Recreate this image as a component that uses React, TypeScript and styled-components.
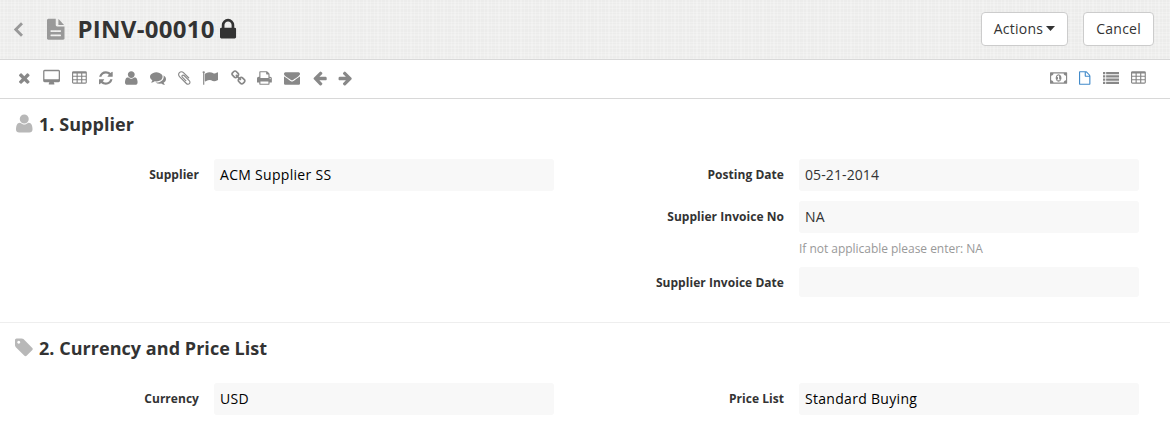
import React from 'react';
import styled, { createGlobalStyle } from 'styled-components';

const GlobalStyle = createGlobalStyle`
  * { box-sizing: border-box; }
  body {
    margin: 0;
    background: #fff;
    color: #333;
    font-family: 'Open Sans', 'Noto Sans', sans-serif;
    font-size: 14px;
    line-height: 20px;
  }
`;

const CELL = 'h-320q-14 0-23 9t-9 23v192q0 14 9 23t23 9h320q14 0 23-9t9-23z';
const tableCells = [576, 1088, 1600]
  .flatMap((x) => [608, 992, 1376].map((y) => `M${x} ${y}v-192q0-14-9-23t-23-9${CELL}`))
  .join('');
const listRows = [224, 592, 960, 1328]
  .map((y) => `M0 ${y}h256v240h-256zM352 ${y}h1440v240h-1440z`)
  .join('');

/* Each glyph: left offset, advance width and outline on a 1792-unit em. */
const glyphs = {
  times: [192, 1408, 'M1490 1322q0 40-28 68l-136 136q-28 28-68 28t-68-28l-294-294-294 294q-28 28-68 28t-68-28l-136-136q-28-28-28-68t28-68l294-294-294-294q-28-28-28-68t28-68l136-136q28-28 68-28t68 28l294 294 294-294q28-28 68-28t68 28l136 136q28 28 28 68t-28 68l-294 294 294 294q28 28 28 68z'],
  desktop: [-64, 1920, 'M1696 992v-832q0-13-9.500-22.500t-22.500-9.500h-1536q-13 0-22.500 9.500t-9.500 22.500v832q0 13 9.500 22.500t22.500 9.500h1536q13 0 22.500-9.500t9.500-22.500zM1840 128v1088q0 66-47 113t-113 47h-528q0 37 16 77.500t32 71 16 43.500q0 26-19 45t-45 19h-512q-26 0-45-19t-19-45q0-14 16-44t32-70 16-78h-528q-66 0-113-47t-47-113v-1088q0-66 47-113t113-47h1568q66 0 113 47t47 113z'],
  table: [64, 1664, tableCells + 'M1728 288v1088q0 66-47 113t-113 47h-1344q-66 0-113-47t-47-113v-1088q0-66 47-113t113-47h1344q66 0 113 47t47 113z'],
  refresh: [128, 1536, 'M1639 1056q0 5-1 7-64 268-268 434.500t-478 166.500q-146 0-282.500-55t-243.500-157l-129 129q-19 19-45 19t-45-19-19-45v-448q0-26 19-45t45-19h448q26 0 45 19t19 45-19 45l-137 137q71 66 161 102t187 36q134 0 250-65t186-179q11-17 53-117 8-23 30-23h192q13 0 22.500 9.500t9.500 22.500zm25-800v448q0 26-19 45t-45 19h-448q-26 0-45-19t-19-45 19-45l138-138q-148-137-349-137-134 0-250 65t-186 179q-11 17-53 117-8 23-30 23h-199q-13 0-22.500-9.500t-9.500-22.500v-7q65-268 270-434.500t480-166.500q146 0 284 55.500t245 156.500l130-129q19-19 45-19t45 19 19 45z'],
  user: [192, 1408, 'M1600 1405q0 120-73 189.500t-194 69.500h-874q-121 0-194-69.500t-73-189.500q0-53 3.500-103.500t14-109 26.500-108.500 43-97.500 62-81 85.500-53.500 111.500-20q9 0 42 21.500t74.500 48 108 48 133.500 21.500 133.500-21.500 108-48 74.500-48 42-21.500q61 0 111.500 20t85.500 53.500 62 81 43 97.500 26.500 108.500 14 109 3.500 103.500zm-320-893q0 159-112.500 271.500t-271.500 112.500-271.500-112.500-112.500-271.500 112.500-271.500 271.500-112.500 271.500 112.500 112.500 271.500z'],
  comments: [0, 1792, 'M1408 768q0 139-94 257t-256.500 186.500-353.500 68.500q-86 0-176-16-124 88-278 128-36 9-86 16h-3q-11 0-20.500-8t-11.500-21q-1-3-1-6.500t.5-6.500 2-6l2.500-5 3.500-5.500 4-5 4.500-5 4-4.500q5-6 23-25t26-29.500 22.500-29 25-38.500 20.500-44q-124-72-195-177t-71-224q0-139 94-257t256.500-186.500 353.500-68.500 353.500 68.500 256.500 186.500 94 257zm384 256q0 120-71 224.500t-195 176.500q10 24 20.500 44t25 38.500 22.500 29 26 29.500 23 25q1 1 4 4.500t4.500 5 4 5 3.500 5.500l2.500 5 2 6 .5 6.500-1 6.500q-3 14-13 22t-22 7q-50-7-86-16-154-40-278-128-90 16-176 16-271 0-472-132 58 4 88 4 161 0 309-45t264-129q125-92 192-212t67-254q0-77-23-152 129 71 204 178t75 230z'],
  paperclip: [192, 1408, 'M1596 1385q0 117-79 196t-196 79q-135 0-235-100l-777-776q-113-115-113-271 0-159 110-270t269-111q158 0 273 113l605 606q10 10 10 22 0 16-30.500 46.500t-46.500 30.500q-13 0-23-10l-606-607q-79-77-181-77-106 0-179 75t-73 181q0 105 76 181l776 777q63 63 145 63 64 0 106-42t42-106q0-82-63-145l-581-581q-26-24-60-24-29 0-48 19t-19 48q0 32 25 59l410 410q10 10 10 22 0 16-31 47t-47 31q-12 0-22-10l-410-410q-63-61-63-149 0-82 57-139t139-57q88 0 149 63l581 581q100 98 100 235z'],
  flag: [0, 1792, 'M320 256q0 72-64 110v1266q0 13-9.500 22.500t-22.500 9.500h-64q-13 0-22.500-9.500t-9.500-22.500v-1266q-64-38-64-110 0-53 37.500-90.500t90.500-37.500 90.500 37.500 37.500 90.500zm1472 64v763q0 25-12.500 38.500t-39.500 27.500q-215 116-369 116-61 0-123.500-22t-108.500-48-115.500-48-142.500-22q-192 0-464 146-17 9-33 9-26 0-45-19t-19-45v-742q0-32 31-55 21-14 79-43 236-120 421-120 107 0 200 29t219 88q38 19 88 19 54 0 117.500-21t110-47 88-47 54.500-21q26 0 45 19t19 45z'],
  link: [64, 1664, 'M1520 1216q0-40-28-68l-208-208q-28-28-68-28-42 0-72 32 3 3 19 18.500t21.500 21.500 15 19 13 25.500 3.500 27.500q0 40-28 68t-68 28q-15 0-27.500-3.500t-25.500-13-19-15-21.500-21.500-18.500-19q-33 31-33 73 0 40 28 68l206 207q27 27 68 27 40 0 68-26l147-146q28-28 28-67zm-703-705q0-40-28-68l-206-207q-28-28-68-28-39 0-68 27l-147 146q-28 28-28 67 0 40 28 68l208 208q27 27 68 27 42 0 72-31-3-3-19-18.500t-21.500-21.500-15-19-13-25.500-3.500-27.500q0-40 28-68t68-28q15 0 27.500 3.500t25.500 13 19 15 21.500 21.500 18.500 19q33-31 33-73zm895 705q0 120-85 203l-147 146q-83 83-203 83-121 0-204-85l-206-207q-83-83-83-203 0-123 88-209l-88-88q-86 88-208 88-120 0-204-84l-208-208q-84-84-84-204t85-203l147-146q83-83 203-83 121 0 204 85l206 207q83 83 83 203 0 123-88 209l88 88q86-88 208-88 120 0 204 84l208 208q84 84 84 204z'],
  print: [64, 1664, 'M448 1536h896v-256h-896v256zm0-640h896v-384h-160q-40 0-68-28t-28-68v-160h-640v640zm1152 64q0-26-19-45t-45-19-45 19-19 45 19 45 45 19 45-19 19-45zm128 0v416q0 13-9.500 22.500t-22.500 9.500h-224v160q0 40-28 68t-68 28h-960q-40 0-68-28t-28-68v-160h-224q-13 0-22.500-9.500t-9.500-22.500v-416q0-79 56.500-135.500t135.500-56.500h64v-544q0-40 28-68t68-28h672q40 0 88 20t76 48l152 152q28 28 48 76t20 88v256h64q79 0 135.500 56.500t56.500 135.500z'],
  envelope: [0, 1792, 'M1792 710v794q0 66-47 113t-113 47h-1472q-66 0-113-47t-47-113v-794q44 49 101 87 362 246 497 345 57 42 92.500 65.500t94.500 48 110 24.500h2q51 0 110-24.500t94.500-48 92.500-65.500q170-123 498-345 57-39 100-87zm0-294q0 79-49 151t-122 123q-376 261-468 325-10 7-42.500 31t-54 38.500-52 32.500-57.500 27-50 9h-2q-23 0-50-9t-57.500-27-52-32.500-54-38.500-42.500-31q-91-64-262-182.500t-205-142.500q-62-42-117-115.500t-55-136.500q0-78 41.500-130t118.500-52h1472q65 0 112.500 47t47.500 113z'],
  arrowLeft: [128, 1536, 'M1664 896v128q0 53-32.500 90.500t-84.500 37.500h-704l293 294q38 36 38 90t-38 90l-75 76q-37 37-90 37-52 0-91-37l-651-652q-37-37-37-90 0-52 37-91l651-650q38-38 91-38 52 0 90 38l75 74q38 38 38 91t-38 91l-293 293h704q52 0 84.500 37.500t32.500 90.500z'],
  arrowRight: [64, 1536, 'M1600 960q0 54-37 91l-651 651q-39 37-91 37-51 0-90-37l-75-75q-38-38-38-91t38-91l293-293h-704q-52 0-84.500-37.500t-32.500-90.500v-128q0-53 32.500-90.500t84.500-37.500h704l-293-294q-38-36-38-90t38-90l75-75q38-38 90-38 53 0 91 38l651 651q37 35 37 90z'],
  money: [0, 1920, 'M768 1152h384v-96h-128v-448h-114l-148 137 77 80q42-37 55-57h2v288h-128v96zm512-256q0 70-21 142t-59.500 134-101.500 101-138 39-138-39-101.500-101-59.500-134-21-142 21-142 59.500-134 101.500-101 138-39 138 39 101.500 101 59.500 134 21 142zm512 256v-512q-106 0-181-75t-75-181h-1152q0 106-75 181t-181 75v512q106 0 181 75t75 181h1152q0-106 75-181t181-75zm128-832v1152q0 26-19 45t-45 19h-1792q-26 0-45-19t-19-45v-1152q0-26 19-45t45-19h1792q26 0 45 19t19 45z'],
  file: [256, 1280, 'M1468 544q28 28 48 76t20 88v860q0 40-28 68t-68 28h-1088q-40 0-68-28t-28-68v-1344q0-40 28-68t68-28h640q40 0 88 20t76 48zM1024 264v376h376q-10-29-22-41l-313-313q-12-12-41-22zM1408 1536v-768h-416q-40 0-68-28t-28-68v-416h-512v1280z'],
  list: [0, 1792, listRows],
  fileText: [256, 1280, 'M1468 540q28 28 40 52h-420v-448q24 12 48 36zM992 688h544v880q0 40-28 68t-68 28h-1088q-40 0-68-28t-28-68v-1344q0-40 28-68t68-28h544v464q0 40 28 68t68 28zM1280 1376v-64q0-32-32-32h-704q-32 0-32 32v64q0 32 32 32h704q32 0 32-32zM1280 1056v-64q0-32-32-32h-704q-32 0-32 32v64q0 32 32 32h704q32 0 32-32z'],
  lock: [320, 1152, 'M640 768h512v-192q0-106-75-181t-181-75-181 75-75 181v192zm832 96v576q0 40-28 68t-68 28h-960q-40 0-68-28t-28-68v-576q0-40 28-68t68-28h32v-192q0-184 132-316t316-132 316 132 132 316v192h32q40 0 68 28t28 68z'],
  tag: [128, 1536, 'M576 448q0-53-37.500-90.500t-90.500-37.500-90.500 37.500-37.500 90.500 37.500 90.500 90.500 37.500 90.500-37.500 37.500-90.500zm1067 576q0 53-37 90l-491 492q-39 37-91 37-53 0-90-37l-715-716q-38-37-64.500-101t-26.500-117v-416q0-52 38-90t90-38h416q53 0 117 26.500t102 64.500l715 714q37 39 37 91z'],
} as const;

type GlyphName = keyof typeof glyphs;

const Svg = styled.svg`
  display: block;
  flex: none;
  fill: currentColor;
  overflow: visible;
`;

const Icon = ({ name, size = 16 }: { name: GlyphName; size?: number }) => {
  const [x, width, outline] = glyphs[name];
  return (
    <Svg width={(width / 1792) * size} height={size} viewBox={`${x} 0 ${width} 1792`}>
      <path fillRule="evenodd" d={outline} />
    </Svg>
  );
};

const Header = styled.header`
  display: flex;
  align-items: center;
  height: 60px;
  padding: 0 16px 2px 14px;
  border-bottom: 1px solid #d8d8d8;
  background-color: #ececeb;
  background-image:
    repeating-linear-gradient(0deg, rgba(255, 255, 255, 0.22) 0 1px, transparent 1px 3px, rgba(255, 255, 255, 0.22) 3px 5px, transparent 5px 6px, rgba(255, 255, 255, 0.22) 6px 7px, transparent 7px 10px),
    repeating-linear-gradient(90deg, rgba(255, 255, 255, 0.22) 0 1px, transparent 1px 3px, rgba(255, 255, 255, 0.22) 3px 5px, transparent 5px 7px, rgba(255, 255, 255, 0.22) 7px 8px, transparent 8px 11px);
`;

const Back = styled.svg`
  width: 9px;
  height: 15px;
  margin: 2px 24px 0 0;
  fill: none;
  stroke: #999;
  stroke-width: 2.8;
`;

const DocIcon = styled.span`
  color: #999;
  margin-top: 1px;
`;

const Title = styled.h1`
  margin: 0 5px 0 13px;
  font-size: 24px;
  line-height: 30px;
  font-weight: 700;
  letter-spacing: 0.27px;
`;

const LockIcon = styled.span`
  margin-top: 2px;
`;

const Buttons = styled.div`
  display: flex;
  gap: 15px;
  margin-left: auto;
`;

const Button = styled.button`
  display: flex;
  align-items: center;
  height: 34px;
  padding: 0 12px;
  border: 1px solid #ccc;
  border-radius: 4px;
  background: #fff;
  color: #333;
  font: inherit;
  letter-spacing: 0.25px;
`;

const Caret = styled.svg`
  width: 9px;
  height: 5px;
  margin-left: 3px;
  fill: currentColor;
`;

const Toolbar = styled.nav`
  display: flex;
  align-items: center;
  justify-content: space-between;
  height: 39px;
  padding: 0 24px 3px 18px;
  border-bottom: 1px solid #d8d8d8;
  color: #888;
`;

const ToolGroup = styled.div`
  display: flex;
  gap: 12.15px;
`;

const Tool = styled.span<{ $active?: boolean }>`
  color: ${(p) => (p.$active ? '#428bca' : 'inherit')};
`;

const Section = styled.section`
  height: 223px;
  padding: 15px 31px 0 15px;

  & + & {
    height: 107px;
    border-top: 1px solid #eee;
  }
`;

const Heading = styled.h2`
  display: flex;
  align-items: center;
  height: 20px;
  margin: 0 0 25px;
  font-size: 18px;
  line-height: 20px;
  letter-spacing: 0.04px;
`;

const HeadingIcon = styled.span<{ $indent?: boolean }>`
  width: 24px;
  padding-left: ${(p) => (p.$indent ? 1 : 0)}px;
  margin-top: -1px;
  color: #b8b8b8;
`;

const Columns = styled.div`
  display: grid;
  grid-template-columns: 539px 540px;
  column-gap: 45px;
`;

const Column = styled.div`
  display: flex;
  flex-direction: column;
  gap: 10px;
`;

const Field = styled.div`
  display: grid;
  grid-template-columns: 1fr 340px;
  column-gap: 15px;
`;

const Label = styled.label`
  text-align: right;
  font-size: 12px;
  font-weight: 700;
  line-height: 31px;
  letter-spacing: 0.04px;
`;

const Value = styled.div<{ $link?: boolean; $empty?: boolean }>`
  height: ${(p) => (p.$empty ? 30 : 32)}px;
  padding: 0 6px;
  border-radius: 3px;
  background: #f8f8f8;
  color: ${(p) => (p.$link ? '#000' : '#333')};
  letter-spacing: ${(p) => (p.$link ? 0.3 : 0.1)}px;
  line-height: 32px;
`;

const Help = styled.p`
  grid-column: 2;
  margin: 6px 0 -1px;
  color: #999;
  font-size: 12px;
  line-height: 19px;
  letter-spacing: -0.03px;
`;

const leftTools: GlyphName[] = [
  'times', 'desktop', 'table', 'refresh', 'user', 'comments', 'paperclip',
  'flag', 'link', 'print', 'envelope', 'arrowLeft', 'arrowRight',
];
const viewTools: GlyphName[] = ['money', 'file', 'list', 'table'];

interface FieldProps {
  label: string;
  value?: string;
  link?: boolean;
  help?: string;
}

const FormField = ({ label, value, link, help }: FieldProps) => (
  <Field>
    <Label>{label}</Label>
    <Value $link={link} $empty={!value}>{value}</Value>
    {help && <Help>{help}</Help>}
  </Field>
);

export default function App() {
  return (
    <>
      <GlobalStyle />
      <Header>
        <Back viewBox="0 0 9 15"><path d="M8 1.200L1.800 7.500L8 13.800" /></Back>
        <DocIcon><Icon name="fileText" size={24.5} /></DocIcon>
        <Title>PINV-00010</Title>
        <LockIcon><Icon name="lock" size={25} /></LockIcon>
        <Buttons>
          <Button>Actions<Caret viewBox="0 0 9 5"><path d="M0 0h9l-4.500 5z" /></Caret></Button>
          <Button>Cancel</Button>
        </Buttons>
      </Header>
      <Toolbar>
        <ToolGroup>
          {leftTools.map((name) => <Tool key={name}><Icon name={name} /></Tool>)}
        </ToolGroup>
        <ToolGroup>
          {viewTools.map((name) => <Tool key={name} $active={name === 'file'}><Icon name={name} /></Tool>)}
        </ToolGroup>
      </Toolbar>
      <main>
        <Section>
          <Heading><HeadingIcon $indent><Icon name="user" size={21} /></HeadingIcon>1. Supplier</Heading>
          <Columns>
            <Column><FormField label="Supplier" value="ACM Supplier SS" link /></Column>
            <Column>
              <FormField label="Posting Date" value="05-21-2014" />
              <FormField label="Supplier Invoice No" value="NA" help="If not applicable please enter: NA" />
              <FormField label="Supplier Invoice Date" />
            </Column>
          </Columns>
        </Section>
        <Section>
          <Heading><HeadingIcon><Icon name="tag" size={21} /></HeadingIcon>2. Currency and Price List</Heading>
          <Columns>
            <Column><FormField label="Currency" value="USD" link /></Column>
            <Column><FormField label="Price List" value="Standard Buying" link /></Column>
          </Columns>
        </Section>
      </main>
    </>
  );
}
